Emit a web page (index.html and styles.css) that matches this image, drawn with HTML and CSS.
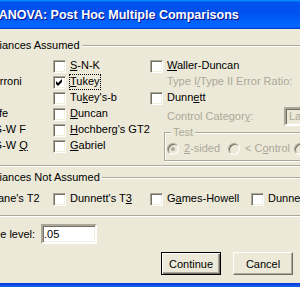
FILE: index.html
```html
<!DOCTYPE html>
<html lang="en">
<head>
    <meta charset="UTF-8">
    <title>One-Way ANOVA: Post Hoc Multiple Comparisons</title>
    <link rel="stylesheet" href="styles.css">
</head>
<body>
    <div class="window">
        <div class="titlebar">One-Way ANOVA: Post Hoc Multiple Comparisons</div>
        <div class="client">
            <fieldset class="group assumed">
                <legend>Equal Variances Assumed</legend>
                <div class="cols">
                    <div class="col">
                        <div class="opt"><span class="box"></span><span class="txt"><u>L</u>SD</span></div>
                        <div class="opt"><span class="box"></span><span class="txt"><u>B</u>onferroni</span></div>
                        <div class="opt"><span class="box"></span><span class="txt">S<u>i</u>dak</span></div>
                        <div class="opt"><span class="box"></span><span class="txt">Sc<u>h</u>effe</span></div>
                        <div class="opt"><span class="box"></span><span class="txt"><u>R</u>-E-G-W F</span></div>
                        <div class="opt"><span class="box"></span><span class="txt">R-E-G-W <u>Q</u></span></div>
                    </div>
                    <div class="col">
                        <div class="opt"><span class="box"></span><span class="txt"><u>S</u>-N-K</span></div>
                        <div class="opt">
                            <span class="box checked">
                                <svg width="7" height="7" viewBox="0 0 7 7"><path d="M0 2 L2 4 L6 0 L6 3 L2 7 L0 5 Z" fill="#000"/></svg>
                            </span>
                            <span class="txt focus"><u>T</u>ukey</span>
                        </div>
                        <div class="opt"><span class="box"></span><span class="txt">Tu<u>k</u>ey's-b</span></div>
                        <div class="opt"><span class="box"></span><span class="txt"><u>D</u>uncan</span></div>
                        <div class="opt"><span class="box"></span><span class="txt"><u>H</u>ochberg's GT2</span></div>
                        <div class="opt"><span class="box"></span><span class="txt"><u>G</u>abriel</span></div>
                    </div>
                    <div class="col">
                        <div class="opt"><span class="box"></span><span class="txt"><u>W</u>aller-Duncan</span></div>
                        <div class="line dis">Type I<u>/</u>Type II Error Ratio:</div>
                        <div class="opt"><span class="box"></span><span class="txt">Dunn<u>e</u>tt</span></div>
                        <div class="ctrl">
                            <span class="ctrl-label dis">Control Categor<u>y</u>:</span>
                            <span class="combo">Last</span>
                        </div>
                        <fieldset class="group test">
                            <legend class="dis">Test</legend>
                            <div class="radios">
                                <div class="radio-opt first"><span class="radio on"></span><span class="txt dis"><u>2</u>-sided</span></div>
                                <div class="radio-opt second"><span class="radio"></span><span class="txt dis">&lt; C<u>o</u>ntrol</span></div>
                                <div class="radio-opt"><span class="radio"></span><span class="txt dis">&gt; Co<u>n</u>trol</span></div>
                            </div>
                        </fieldset>
                    </div>
                </div>
            </fieldset>

            <fieldset class="group not-assumed">
                <legend>Equal Variances Not Assumed</legend>
                <div class="cols four">
                    <div class="opt"><span class="box"></span><span class="txt">Tamhane's T2</span></div>
                    <div class="opt"><span class="box"></span><span class="txt">Dunnett's T<u>3</u></span></div>
                    <div class="opt"><span class="box"></span><span class="txt">G<u>a</u>mes-Howell</span></div>
                    <div class="opt"><span class="box"></span><span class="txt">Dunnett's <u>C</u></span></div>
                </div>
            </fieldset>

            <div class="sig">
                <label for="alpha">Signi<u>f</u>icance level:</label>
                <span class="field" id="alpha">.05</span>
            </div>

            <div class="buttons">
                <button class="default">Continue</button>
                <button>Cancel</button>
            </div>
        </div>
        <div class="frame-bottom"></div>
    </div>
</body>
</html>
```

FILE: styles.css
```css
* {
    box-sizing: border-box;
}
body {
    margin: 0;
    overflow: hidden;
    background: #ECE9D8;
    font-family: "Liberation Sans", Arial, sans-serif;
    font-size: 11px;
    color: #000;
}
u {
    text-decoration-thickness: 1px;
    text-underline-offset: 1px;
}
.window {
    width: 430px;
    height: 287px;
    margin-left: -66px;
    display: flex;
    flex-direction: column;
}
.titlebar {
    height: 29px;
    padding: 1px 0 0 8px;
    line-height: 28px;
    font-size: 12.5px;
    font-weight: bold;
    color: #fff;
    white-space: nowrap;
    text-shadow: 1px 1px #0f1089;
    background: linear-gradient(180deg, #0997ff, #0053ee 8%, #0050ee 40%, #0066ff 88%, #0066ff 93%, #005bff 95%, #003dd7 96%, #003dd7);
}
.client {
    flex: 1;
    padding: 0 12px;
}

/* etched group boxes */
.group {
    min-width: 0;
    margin: 0;
    border: 1px solid #ACA899;
    box-shadow: inset 1px 1px #fff, 1px 1px #fff;
}
.group legend {
    padding: 0 2px;
    margin-left: -4px;
    line-height: 13px;
    background: #ECE9D8;
    white-space: nowrap;
}
.assumed {
    margin-top: 10px;
    padding: 6px 0 4px 7px;
}
.not-assumed {
    margin-top: 5px;
    padding: 7px 0 8px 7px;
}
.test {
    margin-left: 14px;
    padding: 2px 0 3px 2px;
}
.test legend {
    margin-left: 4px;
}

.cols {
    display: grid;
    grid-template-columns: 99px 97px 1fr;
}
.cols.four {
    grid-template-columns: 99px 97px 101px 1fr;
}

.opt {
    display: flex;
    height: 16px;
    white-space: nowrap;
}
.txt {
    margin-top: 1px;
    line-height: 13px;
}
.focus {
    margin: 0 0 0 -1px;
    border: 1px dotted #000;
}
.dis {
    color: #ACA899;
}
.line {
    height: 16px;
    padding: 1px 0 0 17px;
    line-height: 13px;
    white-space: nowrap;
}

/* classic sunken check box */
.box {
    flex: none;
    width: 13px;
    height: 13px;
    margin: 2px 4px 0 0;
    background: #fff;
    border: 1px solid;
    border-color: #ACA899 #fff #fff #ACA899;
    box-shadow: inset 1px 1px #716F64, inset -1px -1px #F1EFE2;
}
.box svg {
    display: block;
    margin: 2px 0 0 2px;
}

.ctrl {
    display: flex;
    align-items: center;
    height: 19px;
    margin-top: 1px;
    padding-left: 17px;
    white-space: nowrap;
}
.ctrl-label {
    width: 117px;
    line-height: 13px;
}
.combo {
    width: 60px;
    height: 19px;
    padding: 0 3px;
    line-height: 15px;
    color: #ACA899;
    border: 2px solid;
    border-color: #ACA899 #fff #fff #ACA899;
    box-shadow: inset 1px 1px #716F64, inset -1px -1px #F1EFE2;
}

.radios {
    display: flex;
    height: 16px;
    white-space: nowrap;
}
.radio-opt {
    display: flex;
}
.radio-opt.first {
    width: 61px;
}
.radio-opt.second {
    width: 66px;
}
.radio {
    position: relative;
    flex: none;
    width: 12px;
    height: 12px;
    margin: 2px 5px 0 0;
    border-radius: 50%;
    background: #ECE9D8;
    border: 1px solid;
    border-color: #ACA899 #fff #fff #ACA899;
    box-shadow: inset 1px 1px #716F64;
}
.radio.on::after {
    content: "";
    position: absolute;
    left: 3px;
    top: 3px;
    width: 4px;
    height: 4px;
    border-radius: 50%;
    background: #ACA899;
}

.sig {
    display: flex;
    align-items: center;
    height: 20px;
    margin: 8px 0 0 1px;
    white-space: nowrap;
}
.sig label {
    width: 94px;
    line-height: 13px;
}
.field {
    width: 56px;
    height: 20px;
    padding: 0 1px;
    line-height: 16px;
    background: #fff;
    border: 1px solid;
    border-color: #ACA899 #fff #fff #ACA899;
    box-shadow: inset 1px 1px #716F64, inset -1px -1px #F1EFE2;
    border-width: 2px;
}

.buttons {
    display: flex;
    gap: 12px;
    margin: 8px 0 0 215px;
}
button {
    width: 60px;
    height: 23px;
    padding: 0;
    font: inherit;
    color: #000;
    background: #ECE9D8;
    border: 1px solid;
    border-color: #fff #716F64 #716F64 #fff;
    box-shadow: inset -1px -1px #ACA899;
}
button.default {
    border-color: #000;
    box-shadow: inset 1px 1px #fff, inset -1px -1px #716F64, inset -2px -2px #ACA899;
}

.frame-bottom {
    height: 4px;
    background: linear-gradient(180deg, #0831d9, #166aee);
}
```
